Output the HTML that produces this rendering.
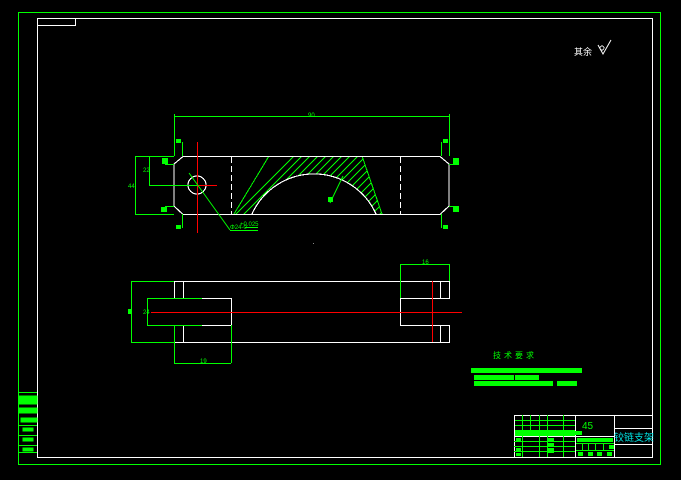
<!DOCTYPE html>
<html><head><meta charset="utf-8"><style>
html,body{margin:0;padding:0;background:#000;width:681px;height:480px;overflow:hidden}
svg{display:block}
text{font-family:"Liberation Sans","Noto Sans CJK SC",sans-serif}
</style></head><body>
<svg width="681" height="480" viewBox="0 0 681 480" xmlns="http://www.w3.org/2000/svg" shape-rendering="crispEdges">
<defs>
<clipPath id="hc"><path d="M234,214 L269,156 L362,156 L382,214 L376,214 A68,68 0 0 0 252,214 Z"/></clipPath>
</defs>
<rect x="18.5" y="12.5" width="642" height="452" fill="none" stroke="#00ff00" stroke-width="1"/>
<rect x="37.5" y="18.5" width="615" height="439" fill="none" stroke="#fff" stroke-width="1"/>
<rect x="37.5" y="18.5" width="38" height="7" fill="none" stroke="#fff" stroke-width="1"/>
<g fill="#00ff00" stroke="#00ff00">
<line x1="18" y1="392.5" x2="37" y2="392.5"/>
<rect x="19" y="396" width="18" height="8"/>
<rect x="19" y="408" width="18" height="5"/>
<rect x="21" y="418" width="16" height="4"/>
<rect x="23" y="428" width="10" height="3"/>
<rect x="23" y="438" width="10" height="3"/>
<rect x="23" y="448" width="10" height="3"/>
<line x1="18" y1="425.5" x2="37" y2="425.5"/><line x1="18" y1="435.5" x2="37" y2="435.5"/><line x1="18" y1="445.5" x2="37" y2="445.5"/><line x1="18" y1="452.5" x2="37" y2="452.5"/>
</g>
<text x="574" y="55" font-size="9" fill="#fff">其余</text>
<path d="M598,45 L603,54 L611,40" fill="none" stroke="#fff" stroke-width="1" shape-rendering="auto"/>
<circle cx="602" cy="48" r="2" fill="none" stroke="#fff" stroke-width="0.8"/>

<g clip-path="url(#hc)" stroke="#00ff00" stroke-width="1">
<path d="M220,230 L300,150 M228,230 L308,150 M236,230 L316,150 M244,230 L324,150 M252,230 L332,150 M260,230 L340,150 M268,230 L348,150 M276,230 L356,150 M284,230 L364,150 M292,230 L372,150 M300,230 L380,150 M308,230 L388,150 M316,230 L396,150 M324,230 L404,150 M332,230 L412,150 M340,230 L420,150 M348,230 L428,150 M356,230 L436,150 M364,230 L444,150"/>
</g>
<path d="M234,214 L269,156 M362,156 L382,214" stroke="#00ff00" stroke-width="1" fill="none"/>
<g stroke="#fff" stroke-width="1.2" fill="none">
<path d="M183,156.5 L440,156.5 L449,164 L449,206 L440,214.5 L183,214.5 L174,206 L174,164 Z"/>
<path d="M252,214 A68,68 0 0 1 376,214"/>
<circle cx="197" cy="185" r="9"/>
<line x1="231.5" y1="157" x2="231.5" y2="214" stroke-dasharray="6,3"/>
<line x1="400.5" y1="157" x2="400.5" y2="214" stroke-dasharray="6,3"/>
</g>
<g stroke="#ff0000" stroke-width="1.2">
<line x1="197.5" y1="142" x2="197.5" y2="233"/>
<line x1="180" y1="185.5" x2="217" y2="185.5"/>
</g>
<g stroke="#00ff00" stroke-width="1" fill="none">
<line x1="174" y1="116.5" x2="449" y2="116.5"/>
<line x1="174.5" y1="114" x2="174.5" y2="156"/><line x1="449.5" y1="114" x2="449.5" y2="156"/>
<line x1="135" y1="156.5" x2="174" y2="156.5"/><line x1="135" y1="214.5" x2="174" y2="214.5"/>
<line x1="135.5" y1="156" x2="135.5" y2="214"/>
<line x1="149.5" y1="156" x2="149.5" y2="185"/><line x1="149" y1="185.5" x2="197" y2="185.5"/>
<path d="M174,164.5 L165,164.5 M174,206.5 L165,206.5 M182.5,142 L182.5,156 M182.5,214 L182.5,228 M449,164.5 L459,164.5 M449,206.5 L459,206.5 M441.5,142 L441.5,156 M441.5,214 L441.5,228"/>
<line x1="189" y1="173" x2="230" y2="230" shape-rendering="auto"/>
<line x1="230" y1="230.5" x2="258" y2="230.5"/>
<line x1="343" y1="176" x2="330" y2="203" shape-rendering="auto"/>
<line x1="245" y1="227.5" x2="258" y2="227.5"/>
</g>
<g fill="#00ff00" font-size="6">
<text x="308" y="117">90</text>
<text x="128" y="188">44</text>
<text x="143" y="172">22</text>
<text x="230" y="229">Φ24-0</text>
<text x="240" y="226">+0.025</text>
<rect x="328" y="197" width="5" height="5"/>
<rect x="162" y="158" width="6" height="6"/><rect x="161" y="207" width="6" height="5"/>
<rect x="453" y="158" width="6" height="6"/><rect x="453" y="207" width="6" height="5"/>
<rect x="176" y="139" width="5" height="4"/><rect x="176" y="225" width="5" height="4"/>
<rect x="443" y="139" width="5" height="4"/><rect x="443" y="225" width="5" height="4"/>
</g>

<g stroke="#fff" stroke-width="1.2" fill="none">
<path d="M174.5,281.5 L449.5,281.5 L449.5,298.5 L400.5,298.5 L400.5,325.5 L449.5,325.5 L449.5,342.5 L174.5,342.5 L174.5,325.5 L231.5,325.5 L231.5,298.5 L174.5,298.5 Z"/>
<line x1="183.5" y1="281" x2="183.5" y2="298"/><line x1="183.5" y1="325" x2="183.5" y2="342"/>
<line x1="440.5" y1="281" x2="440.5" y2="298"/><line x1="440.5" y1="325" x2="440.5" y2="342"/>
</g>
<g stroke="#ff0000" stroke-width="1.2">
<line x1="151" y1="312.5" x2="462" y2="312.5"/>
<line x1="432.5" y1="281" x2="432.5" y2="342"/>
</g>
<g stroke="#00ff00" stroke-width="1" fill="none">
<path d="M131,281.5 L174,281.5 M131,342.5 L174,342.5 M131.5,281 L131.5,342"/>
<path d="M147,298.5 L202,298.5 M147,325.5 L202,325.5 M147.5,298 L147.5,325"/>
<path d="M174.5,325 L174.5,363 M231.5,325 L231.5,363 M174,363.5 L231,363.5"/>
<path d="M400.5,264 L400.5,298 M449.5,264 L449.5,281 M400,264.5 L449,264.5"/>
</g>
<g fill="#00ff00" font-size="6">
<rect x="128" y="309" width="3" height="5"/>
<text x="143" y="314">24</text>
<text x="200" y="363">19</text>
<text x="422" y="264">16</text>
</g>

<text x="493" y="358" font-size="8" fill="#00ff00" letter-spacing="3">技术要求</text>
<g fill="#00ff00">
<rect x="471" y="368" width="111" height="5"/>
<rect x="474" y="375" width="40" height="5"/><rect x="515" y="375" width="24" height="5"/>
<rect x="474" y="381" width="55" height="5"/><rect x="529" y="381" width="24" height="5"/><rect x="557" y="381" width="20" height="5"/>
</g>

<g stroke="#fff" stroke-width="1" fill="none">
<rect x="514.5" y="415.5" width="138" height="42"/>
<line x1="575.5" y1="415" x2="575.5" y2="457"/>
<line x1="614.5" y1="415" x2="614.5" y2="457"/>
<line x1="614" y1="428.5" x2="652" y2="428.5"/>
<line x1="614" y1="444.5" x2="652" y2="444.5"/>
<line x1="514" y1="436.5" x2="614" y2="436.5"/>
</g>
<g stroke="#00ff00" stroke-width="1">
<path d="M515,420.5 L575,420.5 M515,425.5 L575,425.5 M515,430.5 L575,430.5 M522.5,415 L522.5,457 M530.5,415 L530.5,436 M539.5,415 L539.5,457 M547.5,415 L547.5,457 M563.5,415 L563.5,457 M514,441.5 L575,441.5 M514,446.5 L575,446.5 M514,451.5 L575,451.5"/>
<path d="M576,443.5 L614,443.5 M576,450.5 L614,450.5 M582.5,443 L582.5,450 M588.5,443 L588.5,450 M595.5,443 L595.5,450 M603.5,443 L603.5,450"/>
</g>
<g fill="#00ff00">
<rect x="515" y="431" width="60" height="5"/><rect x="575" y="431" width="7" height="4"/>
<rect x="516" y="438" width="5" height="3"/><rect x="516" y="448" width="5" height="3"/><rect x="516" y="453" width="5" height="3"/>
<rect x="547" y="438" width="7" height="3"/><rect x="547" y="443" width="7" height="3"/><rect x="547" y="448" width="7" height="5"/>
<rect x="577" y="438" width="36" height="4"/>
<rect x="578" y="452" width="5" height="4"/><rect x="588" y="452" width="5" height="4"/><rect x="597" y="452" width="5" height="4"/><rect x="607" y="452" width="5" height="4"/>
<rect x="609" y="445" width="5" height="4"/>
</g>
<text x="582" y="429" font-size="10" fill="#00ff00">45</text>
<text x="614" y="441" font-size="10" fill="#00e5e5">铰链支架</text>
<rect x="313" y="243" width="1" height="1" fill="#888"/>
</svg>
</body></html>
